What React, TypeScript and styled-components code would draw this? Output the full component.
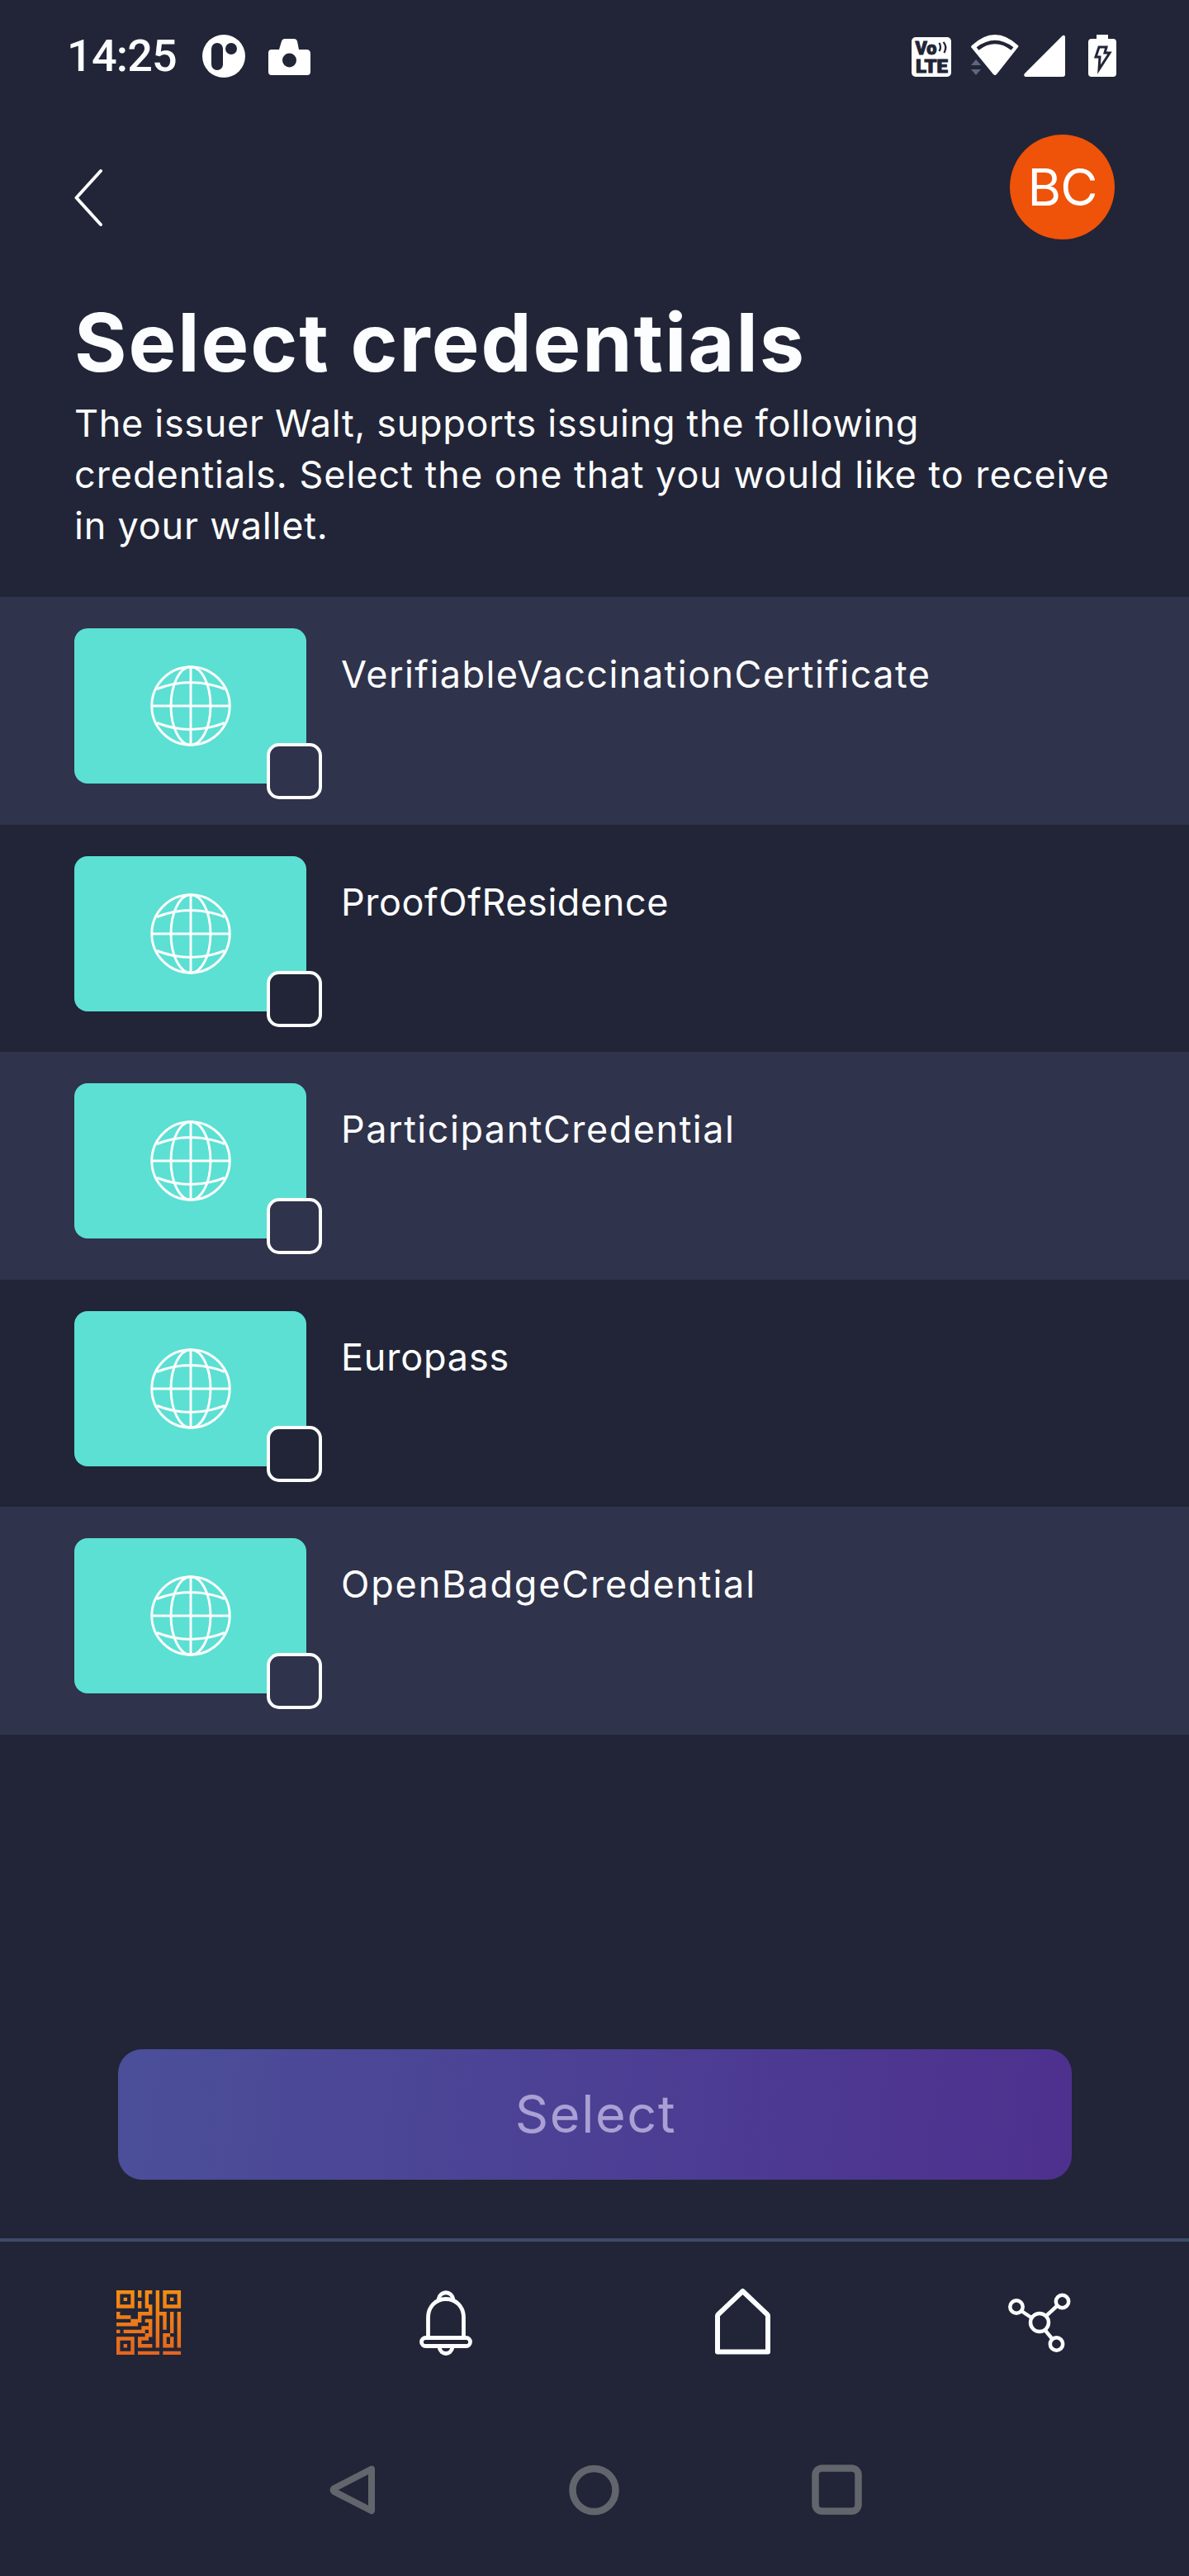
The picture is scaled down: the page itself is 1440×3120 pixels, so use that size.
import React from 'react';
import styled, { createGlobalStyle } from 'styled-components';

const Global = createGlobalStyle`
  *{box-sizing:border-box}
  body{margin:0;background:#212537}
`;

const Screen = styled.main`
  width:1440px;height:3120px;display:flex;flex-direction:column;
  background:#212537;color:#fcfdfe;font-family:Inter,"Noto Sans",sans-serif;overflow:hidden;
`;
const StatusBar = styled.div`
  height:142px;flex:none;display:flex;align-items:flex-start;padding:0 0 0 81px;
`;
const Clock = styled.span`
  font:500 54px/60px Roboto,sans-serif;width:135px;margin-top:38px;white-space:nowrap;letter-spacing:-0.8px;
`;
const LeftIcons = styled.svg`display:block;width:160px;height:142px;margin-left:24px;`;
const RightIcons = styled.svg`display:block;width:300px;height:142px;margin-left:auto;margin-right:60px;`;
const Header = styled.header`
  height:216px;flex:none;display:flex;justify-content:space-between;padding:21px 90px 0 88px;
`;
const Back = styled.svg`display:block;width:44px;height:80px;margin-top:37px;`;
const Avatar = styled.div`
  width:127px;height:127px;border-radius:50%;background:#ef5209;
  display:flex;align-items:center;justify-content:center;font-size:62px;letter-spacing:-1px;
`;
const Title = styled.h1`
  margin:0;padding-left:90px;height:124px;flex:none;font-size:97px;line-height:114px;font-weight:700;white-space:nowrap;
  letter-spacing:1.95px;
`;
const Intro = styled.div`height:241px;flex:none;padding-left:90px;`;
const Line = styled.p<{ $ls: number }>`
  margin:0;font-size:45px;line-height:62px;white-space:nowrap;letter-spacing:${p => p.$ls}px;
`;
const List = styled.ul`margin:0;padding:0;list-style:none;flex:none;height:1378px;display:grid;grid-template-rows:repeat(5,1fr);`;
const Row = styled.li<{ $bg: string }>`
  background:${p => p.$bg};display:flex;padding:38px 0 0 90px;
`;
const Card = styled.div`
  position:relative;width:281px;height:188px;border-radius:16px;background:#5be0d3;
  display:flex;align-items:center;justify-content:center;
`;
const Globe = styled.svg`display:block;width:100px;height:100px;`;
const Check = styled.span<{ $bg: string }>`
  position:absolute;right:-19px;bottom:-19px;width:67px;height:68px;border:4px solid #fcfdfe;border-radius:15px;background:${p => p.$bg};
`;
const Name = styled.span<{ $ls: number }>`
  margin:25px 0 0 42px;font-size:45px;line-height:62px;letter-spacing:${p => p.$ls}px;
`;
const Actions = styled.div`flex:1;display:flex;flex-direction:column;justify-content:flex-end;align-items:center;padding-bottom:71px;`;
const SelectButton = styled.button`
  width:1155px;height:158px;border:0;border-radius:29px;padding:0 0 2px 3px;color:#aaa0d4;
  background:linear-gradient(97deg,#4b4f99 0%,#4c3f94 52%,#4e308e 100%);
  font:400 63px/75px Inter,sans-serif;letter-spacing:1.6px;
`;
const Tabs = styled.nav`
  flex:none;height:209px;border-top:4px solid #3b4c6b;display:grid;grid-template-columns:repeat(4,1fr);
  justify-items:center;align-items:start;padding-top:48px;
`;
const TabIcon = styled.svg`display:block;width:100px;height:100px;`;
const SystemBar = styled.div`
  flex:none;height:200px;display:grid;grid-template-columns:80px 80px 80px;column-gap:213px;justify-content:center;padding-top:56px;
`;
const SystemIcon = styled.svg`display:block;width:80px;height:80px;`;

const rows = [
  { name: 'VerifiableVaccinationCertificate', ls: 1.45 },
  { name: 'ProofOfResidence', ls: 0.55 },
  { name: 'ParticipantCredential', ls: 1.5 },
  { name: 'Europass', ls: 0.8 },
  { name: 'OpenBadgeCredential', ls: 1.82 },
];

const qr = [
  '#####.#.##.#.#####',
  '#...#.#.#..#.#...#',
  '#.#.#...#..#.#.#.#',
  '#...#.#.#..#.#...#',
  '#####.#.##.#.#####',
  '.........#.#......',
  '#.....####.###.#.#',
  '####..#....#.#.#.#',
  '....###.##.#.#.#.#',
  '######...#.#.#.#.#',
  '.......###.#.#.#.#',
  '#.######.#.#...#.#',
  '........##.#.##..#',
  '#####.###..#.#.#.#',
  '#...#.#....#.#.#.#',
  '#.#.#.####.#.###.#',
  '#...#.............',
  '#####.######.#####',
];

export default function App() {
  return (
    <Screen>
      <Global />
      <StatusBar>
        <Clock>14:25</Clock>
        <LeftIcons viewBox="240 0 160 142">
          <circle cx="271" cy="68" r="26" fill="#fff" />
          <rect x="256" y="52" width="14" height="33" rx="7" fill="#212537" />
          <circle cx="280" cy="59" r="7" fill="#212537" />
          <path d="M329 60h9l3-10q1-3 4-3h11q3 0 4 3l2 10h9q5 0 5 5v22q0 4-4 4h-43q-4 0-4-4V64q0-4 4-4Z" fill="#fff" />
          <circle cx="350.5" cy="73" r="8.5" fill="#212537" />
        </LeftIcons>
        <RightIcons viewBox="1080 0 300 142">
          <rect x="1104" y="45" width="48" height="48" rx="5" fill="#fff" />
          <g fill="#212537" stroke="#212537" strokeWidth="1" fontFamily="Roboto, sans-serif" fontWeight="900">
            <text x="1108.500" y="66" fontSize="21.500" textLength="26" lengthAdjust="spacingAndGlyphs">Vo</text>
            <text x="1109" y="87.800" fontSize="22" textLength="39" lengthAdjust="spacingAndGlyphs">LTE</text>
          </g>
          <path d="M1137.500 52q3 5 0 10M1142.500 51q5 5 1 13" fill="none" stroke="#212537" strokeWidth="2.300" />
          <path d="M1177 55q28-26 56 0 1 1 0 2l-26 33q-2 2-4 0l-27-33q0-1 1-2Z" fill="#fff" />
          <path d="M1184 59q21-16 42 0" fill="none" stroke="#212537" strokeWidth="4.500" />
          <path d="m1182 72 6 7h-12ZM1176 84h12l-6 7Z" fill="#62657a" />
          <path d="m1241 89 46-46q3-1 3 2v45q0 3-3 3h-45q-3-1-1-4Z" fill="#fff" />
          <path d="M1328 42h14v5h6q4 0 4 4v38q0 4-4 4h-26q-4 0-4-4V51q0-4 4-4h6Z" fill="#fff" />
          <path d="M1331 57h9l-2 7h6l-13 20 1-15h-5Z" fill="none" stroke="#212537" strokeWidth="3" />
        </RightIcons>
      </StatusBar>
      <Header>
        <Back viewBox="88 200 44 80" fill="none" stroke="#fcfdfe" strokeWidth="4" strokeLinecap="round" strokeLinejoin="round">
          <path d="M122 207 92.500 239.500 122 272" />
        </Back>
        <Avatar>BC</Avatar>
      </Header>
      <Title>Select credentials</Title>
      <Intro>
        <Line $ls={0.69}>The issuer Walt, supports issuing the following</Line>
        <Line $ls={0.98}>credentials. Select the one that you would like to receive</Line>
        <Line $ls={0.8}>in your wallet.</Line>
      </Intro>
      <List>
        {rows.map((r, i) => {
          const bg = i % 2 ? '#212537' : '#2f334b';
          return (
            <Row key={r.name} $bg={bg}>
              <Card>
                <Globe viewBox="0 0 100 100" fill="none" stroke="#fcfdfe" strokeWidth="3">
                  <circle cx="50" cy="50" r="47.200" />
                  <ellipse cx="50" cy="50" rx="24" ry="47.200" />
                  <path d="M50 3v94M3 50h94M9 29.500q41-16 82 0M9 70.500q41 16 82 0" />
                </Globe>
                <Check $bg={bg} />
              </Card>
              <Name $ls={r.ls}>{r.name}</Name>
            </Row>
          );
        })}
      </List>
      <Actions><SelectButton>Select</SelectButton></Actions>
      <Tabs>
        <TabIcon viewBox="130 2762 100 100">
          <defs>
            <linearGradient id="amber" x1="0" y1="2773" x2="0" y2="2851" gradientUnits="userSpaceOnUse">
              <stop stopColor="#f68d12" /><stop offset="1" stopColor="#e5651f" />
            </linearGradient>
          </defs>
          <path fill="url(#amber)" d={qr.map((line, y) => [...line].map((c, x) =>
            c === '#' ? `M${141 + x * 4.333} ${2773 + y * 4.333}h4.4v4.4h-4.4Z` : '').join('')).join('')} />
        </TabIcon>
        <TabIcon viewBox="490 2762 100 100" fill="none" stroke="#fcfdfe" strokeWidth="4.800">
          <path d="M518.500 2829v-23c0-13 9-22.500 21.500-22.500s21.500 9.500 21.500 22.500v23" />
          <path d="M531 2784c2-11 16-11 18 0M532 2842c2 10 14 10 16 0" />
          <rect x="510.500" y="2830.500" width="59" height="10" rx="5" />
        </TabIcon>
        <TabIcon viewBox="850 2762 100 100" fill="none" stroke="#fcfdfe" strokeWidth="6" strokeLinejoin="round">
          <path d="M899.500 2774 869.500 2802.500Q869 2803 869 2804v43.500h61V2804q0-1-.5-1.500Z" />
        </TabIcon>
        <TabIcon viewBox="1210 2762 100 100" fill="none" stroke="#fcfdfe" strokeWidth="4.500">
          <circle cx="1259" cy="2812" r="11" /><circle cx="1231" cy="2793" r="7.700" />
          <circle cx="1286.500" cy="2786.500" r="7.700" /><circle cx="1279.500" cy="2838" r="7.700" />
          <path d="m1237 2798 12 8M1267 2804l13-12M1265.500 2821l9 11" />
        </TabIcon>
      </Tabs>
      <SystemBar>
        <SystemIcon viewBox="387 2976 80 80" fill="none" stroke="#62656c" strokeWidth="8" strokeLinejoin="round">
          <path d="M450 2990.500 404.500 3014q-2 1.800 0 3.600L450 3041Z" />
        </SystemIcon>
        <SystemIcon viewBox="680 2976 80 80" fill="none" stroke="#62656c" strokeWidth="8.500">
          <circle cx="719.500" cy="3016" r="26" />
        </SystemIcon>
        <SystemIcon viewBox="973 2976 80 80" fill="none" stroke="#62656c" strokeWidth="8.500">
          <rect x="987.500" y="2989.500" width="52" height="52" rx="8" />
        </SystemIcon>
      </SystemBar>
    </Screen>
  );
}
